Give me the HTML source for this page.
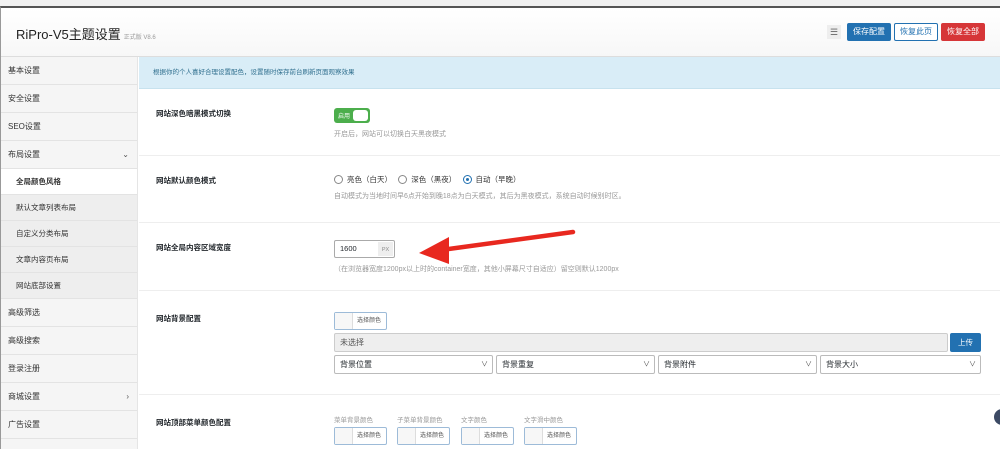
<!DOCTYPE html>
<html><head><meta charset="utf-8"><style>
*{box-sizing:border-box;margin:0;padding:0}
html,body{width:1000px;height:449px;overflow:hidden}
body{background:#f1f1f1;font-family:"Liberation Sans","Noto Sans CJK SC",sans-serif;color:#23282d;position:relative}
.wrap{position:absolute;left:0;top:6px;width:1000px;height:443px;border-top:2px solid #555;border-left:1px solid #999;background:#fff;overflow:hidden}
.hdr{position:absolute;left:0;top:0;width:999px;height:49px;background:linear-gradient(#fff,#f7f7f7);border-bottom:1px solid #ddd}
.hdr h1{position:absolute;left:15px;top:16px;font-size:13px;font-weight:normal;color:#222}
.hdr h1 small{font-size:6px;color:#999;margin-left:3px}
.btn{position:absolute;top:15px;height:18px;font-size:8px;line-height:16px;text-align:center;border-radius:2px;border:1px solid}
.side{position:absolute;left:0;top:49px;width:137px;height:400px;background:#f5f5f5;border-right:1px solid #e5e5e5}
.side div{height:28px;line-height:28px;font-size:8px;padding-left:7px;border-bottom:1px solid #e3e3e3;color:#333;position:relative}
.side div.sub{height:26px;line-height:26px;padding-left:15px;background:#eee;font-size:7.5px}
.side div.act{background:#fff;font-weight:bold}
.side span{position:absolute;right:8px;font-size:8px;color:#555}
.main{position:absolute;left:138px;top:49px;width:861px}
.note{height:32px;background:#d9edf7;border-bottom:1px solid #c7e2ee;font-size:6.5px;color:#31708f;line-height:32px;padding-left:14px}
.sec{position:relative;border-bottom:1px solid #eee}
.lbl{position:absolute;left:17px;font-size:7.5px;font-weight:bold;color:#23282d}
.f{position:absolute;left:195px}
.desc{font-size:7px;color:#999}
.r{display:inline-block;width:9px;height:9px;border:1px solid #888;border-radius:50%;vertical-align:-2px;margin-right:4px;position:relative}
.sel{position:absolute;top:0;height:19px;border:1px solid #bbb;border-radius:2px;font-size:8px;line-height:17px;padding-left:5px;background:#fff}
.sel:after{content:"∨";position:absolute;right:4px;font-size:7px;color:#555}
.cp{display:inline-block;width:53px;height:18px;border:1px solid #9dbbd8;border-radius:2px;position:relative;background:#fff}
.cp i{position:absolute;left:0;top:0;width:18px;height:16px;border-right:1px solid #ddd;background:#f7f7f7}
.cp b{position:absolute;left:22px;top:0;font-size:6px;font-weight:normal;line-height:16px;color:#555;white-space:nowrap}
</style></head><body>
<div class="wrap">
<div class="hdr">
<h1>RiPro-V5主题设置<small>正式版 V8.6</small></h1>
<div style="position:absolute;left:826px;top:17px;width:14px;height:14px;background:#eee;font-size:9px;text-align:center;line-height:14px;color:#666">☰</div>
<div class="btn" style="left:846px;width:44px;background:#2271b1;border-color:#2271b1;color:#fff">保存配置</div>
<div class="btn" style="left:893px;width:44px;background:#fff;border-color:#2271b1;color:#2271b1">恢复此页</div>
<div class="btn" style="left:940px;width:44px;background:#d63638;border-color:#d63638;color:#fff">恢复全部</div>
</div>
<div class="side">
<div>基本设置</div><div>安全设置</div><div>SEO设置</div><div>布局设置<span>⌄</span></div>
<div class="sub act" style="background:#fff">全局颜色风格</div>
<div class="sub">默认文章列表布局</div><div class="sub">自定义分类布局</div><div class="sub">文章内容页布局</div><div class="sub">网站底部设置</div>
<div>高级筛选</div><div>高级搜索</div><div>登录注册</div><div>商城设置<span>›</span></div><div>广告设置</div>
</div>
<div class="main">
<div class="note">根据你的个人喜好合理设置配色，设置随时保存前台刷新页面观察效果</div>
<div class="sec" style="height:67px">
<div class="lbl" style="top:19px">网站深色暗黑模式切换</div>
<div class="f" style="top:19px"><div style="width:36px;height:15px;background:#4cae4c;border-radius:3px;position:relative"><span style="position:absolute;left:4px;top:3px;font-size:6px;color:#fff">启用</span><span style="position:absolute;right:2px;top:2px;width:15px;height:11px;background:#fff;border-radius:3px"></span></div>
<div class="desc" style="margin-top:6px">开启后，网站可以切换白天黑夜模式</div></div>
</div>
<div class="sec" style="height:67px">
<div class="lbl" style="top:19px">网站默认颜色模式</div>
<div class="f" style="top:18px;font-size:7.5px;color:#333"><span class="r"></span>亮色（白天）&nbsp;&nbsp;&nbsp;<span class="r"></span>深色（黑夜）&nbsp;&nbsp;&nbsp;<span class="r" style="border-color:#2271b1"><span style="position:absolute;left:2px;top:2px;width:3px;height:3px;border-radius:50%;background:#2271b1"></span></span>自动（早晚）
<div class="desc" style="margin-top:6px">自动模式为当地时间早6点开始到晚18点为白天模式，其后为黑夜模式，系统自动时候别时区。</div></div>
</div>
<div class="sec" style="height:68px">
<div class="lbl" style="top:19px">网站全局内容区域宽度</div>
<div class="f" style="top:17px"><div style="width:61px;height:18px;border:1px solid #aaa;border-radius:2px;position:relative;font-size:7.5px;line-height:16px;padding-left:5px">1600<span style="position:absolute;right:1px;top:1px;width:15px;height:14px;background:#eee;font-size:5.5px;text-align:center;color:#888">PX</span></div>
<div class="desc" style="margin-top:6px">（在浏览器宽度1200px以上时的container宽度，其他小屏幕尺寸自适应）留空则默认1200px</div></div>
<svg style="position:absolute;left:270px;top:0" width="170" height="50"><line x1="164" y1="9" x2="25" y2="28" stroke="#e8281f" stroke-width="4.5" stroke-linecap="round"/><polygon points="10,30 40,14 40,41" fill="#e8281f"/></svg>
</div>
<div class="sec" style="height:104px">
<div class="lbl" style="top:22px">网站背景配置</div>
<div class="f" style="top:21px;width:648px;height:80px">
<div class="cp"><i></i><b>选择颜色</b></div>
<div style="position:absolute;left:0;top:21px;width:614px;height:19px;background:#eee;border:1px solid #ccc;border-radius:2px;font-size:8px;line-height:17px;padding-left:5px;color:#555">未选择</div>
<div style="position:absolute;left:616px;top:21px;width:31px;height:19px;background:#2271b1;color:#fff;font-size:7.5px;text-align:center;line-height:19px;border-radius:2px">上传</div>
<div style="position:absolute;left:0;top:43px;width:648px;height:19px">
<div class="sel" style="left:0;width:159px">背景位置</div><div class="sel" style="left:162px;width:159px">背景重复</div><div class="sel" style="left:324px;width:159px">背景附件</div><div class="sel" style="left:486px;width:161px">背景大小</div>
</div></div>
</div>
<div class="sec" style="height:60px;border:0">
<div class="lbl" style="top:22px">网站顶部菜单颜色配置</div>
<div class="f" style="top:19px;width:300px;height:40px;font-size:6.5px;color:#999">
<span style="position:absolute;left:0;white-space:nowrap">菜单背景颜色</span><span style="position:absolute;left:63px;white-space:nowrap">子菜单背景颜色</span><span style="position:absolute;left:127px;white-space:nowrap">文字颜色</span><span style="position:absolute;left:190px;white-space:nowrap">文字滑中颜色</span>
<div class="cp" style="position:absolute;left:0;top:13px"><i></i><b>选择颜色</b></div>
<div class="cp" style="position:absolute;left:63px;top:13px"><i></i><b>选择颜色</b></div>
<div class="cp" style="position:absolute;left:127px;top:13px"><i></i><b>选择颜色</b></div>
<div class="cp" style="position:absolute;left:190px;top:13px"><i></i><b>选择颜色</b></div>
</div>
<div style="position:absolute;left:855px;top:14px;width:16px;height:16px;border-radius:50%;background:#3c4a64"></div>
</div>
</div>
</div>
</body></html>
